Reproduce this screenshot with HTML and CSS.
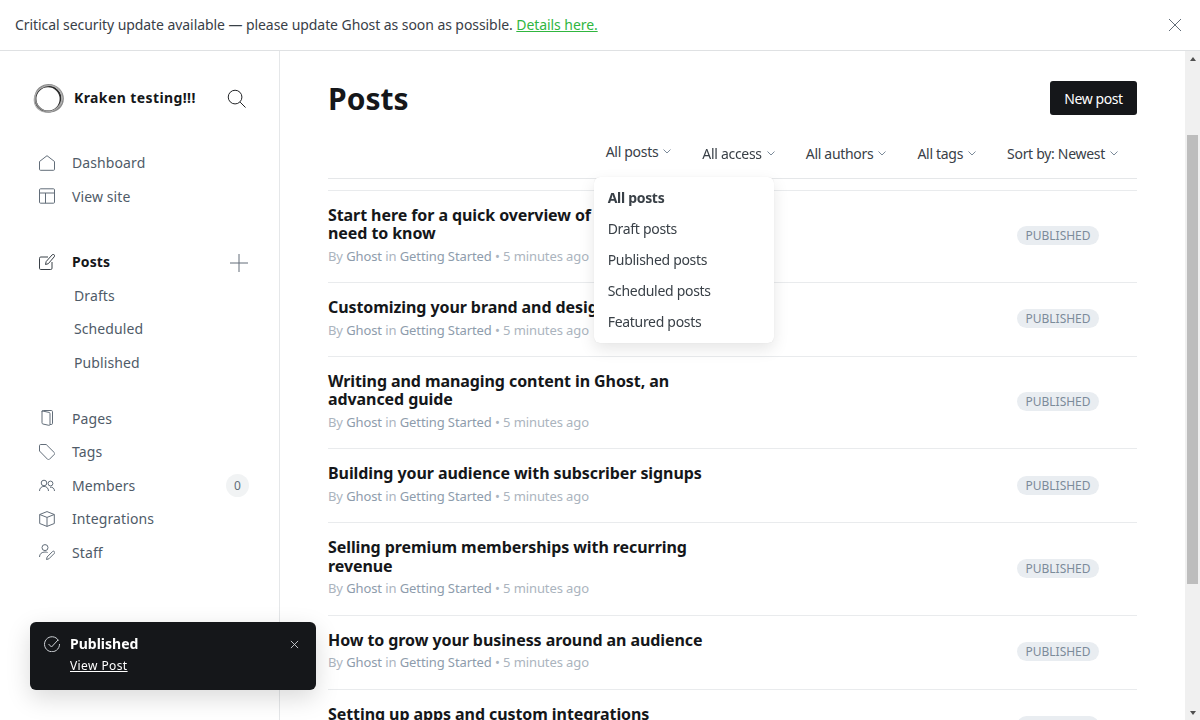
FILE: index.html
```html
<!DOCTYPE html>
<html lang="en">

<head>
    <meta charset="UTF-8">
    <meta name="viewport" content="width=device-width, initial-scale=1.0">
    <title>Posts - Kraken testing!!!</title>
    <link rel="stylesheet" href="styles.css">
</head>

<body>
    <div class="alert">
        <p>Critical security update available — please update Ghost as soon as possible. <a href="#">Details here.</a></p>
        <svg class="alert-close" viewBox="0 0 14 14"><path d="M1 1l12 12M13 1L1 13"/></svg>
    </div>

    <div class="app">
        <aside class="sidebar">
            <div class="brand">
                <svg class="logo" viewBox="0 0 32 32">
                    <ellipse cx="15.500" cy="16.500" rx="13" ry="13" stroke="#2b2b2b" stroke-width="2"/>
                    <ellipse cx="16.500" cy="15.500" rx="14.500" ry="13.800" stroke="#8a8a8a" stroke-width="1.600" transform="rotate(25 16 16)"/>
                    <ellipse cx="15.500" cy="16" rx="14.800" ry="13.200" stroke="#adadad" stroke-width="1.200" transform="rotate(-35 16 16)"/>
                </svg>
                <span class="brand-name">Kraken testing!!!</span>
                <svg class="search" viewBox="0 0 20 20"><circle cx="8.500" cy="8.500" r="7.200"/><path d="M13.800 13.800l5.700 5.700"/></svg>
            </div>

            <ul class="nav">
                <li><svg class="ico" viewBox="0 0 16 16"><path d="M.5 6.500L8 .7l7.500 5.800v7.800a1 1 0 0 1-1 1h-13a1 1 0 0 1-1-1z"/></svg>Dashboard</li>
                <li><svg class="ico" viewBox="0 0 16 16"><rect x=".5" y=".8" width="15" height="14.400" rx="1"/><path d="M.5 5h15M6.500 5v10.200"/></svg>View site</li>
            </ul>

            <ul class="nav">
                <li class="current"><svg class="ico ico-dark" viewBox="0 0 16 16"><path d="M9 3H1.800a1.300 1.300 0 0 0-1.300 1.300v10a1.200 1.200 0 0 0 1.200 1.200h10a1.300 1.300 0 0 0 1.300-1.300V8"/><path d="M6.500 10.500l.7-3L13.200.8a1.300 1.300 0 0 1 2 2L9.300 9.700z"/></svg>Posts<svg class="plus" viewBox="0 0 18 18"><path d="M9 0v18M0 9h18"/></svg></li>
                <li class="sub">Drafts</li>
                <li class="sub">Scheduled</li>
                <li class="sub">Published</li>
            </ul>

            <ul class="nav">
                <li><svg class="ico" viewBox="0 0 16 16"><path d="M3 1.800A1.300 1.300 0 0 1 4.300.5h8A1.200 1.200 0 0 1 13.500 1.700v11.600a1.200 1.200 0 0 1-1.200 1.200H11"/><path d="M3 .9l7 1.500a1.200 1.200 0 0 1 1 1.200v10.700a1 1 0 0 1-1.200 1L3.900 14a1.200 1.200 0 0 1-.9-1.200z"/></svg>Pages</li>
                <li><svg class="ico" viewBox="0 0 16 16"><path d="M.5 1.700A1.200 1.200 0 0 1 1.700.5h5.500l8.300 8.300a1 1 0 0 1 0 1.400l-5.300 5.300a1 1 0 0 1-1.400 0L.5 7z"/></svg>Tags</li>
                <li><svg class="ico" viewBox="0 0 16 16"><circle cx="5" cy="6" r="2.800"/><path d="M.5 14c0-2.800 2-4.600 4.500-4.600S9.500 11.200 9.500 14"/><circle cx="11.500" cy="6.500" r="2.400"/><path d="M11 10.200c2.500-.4 4.500 1.200 4.500 3.800"/></svg>Members<span class="count">0</span></li>
                <li><svg class="ico" viewBox="0 0 16 16"><path d="M8 .6l7.300 2.900v9L8 15.400.7 12.500v-9z"/><path d="M.7 3.500L8 6.400l7.300-2.900M8 6.400v9"/></svg>Integrations</li>
                <li><svg class="ico" viewBox="0 0 16 16"><circle cx="6" cy="3.600" r="3"/><path d="M.5 13c0-3.200 2.300-5 5.500-5 1 0 1.900.2 2.600.5"/><path d="M7.500 15.500l.6-2.500 5.600-5.600a1.300 1.300 0 0 1 1.800 1.800L9.900 14.800z"/></svg>Staff</li>
            </ul>
        </aside>

        <main class="content" id="content">
            <div class="top">
                <div class="title-row">
                    <h1>Posts</h1>
                    <button class="btn-new">New post</button>
                </div>
                <div class="filters">
                    <div class="filter filter-open">All posts<svg viewBox="0 0 8 5"><path d="M.5.5L4 4 7.500.5"/></svg>
                        <ul class="menu">
                            <li class="picked">All posts</li>
                            <li>Draft posts</li>
                            <li>Published posts</li>
                            <li>Scheduled posts</li>
                            <li>Featured posts</li>
                        </ul>
                    </div>
                    <div class="filter">All access<svg viewBox="0 0 8 5"><path d="M.5.5L4 4 7.500.5"/></svg></div>
                    <div class="filter">All authors<svg viewBox="0 0 8 5"><path d="M.5.5L4 4 7.500.5"/></svg></div>
                    <div class="filter">All tags<svg viewBox="0 0 8 5"><path d="M.5.5L4 4 7.500.5"/></svg></div>
                    <div class="filter">Sort by: Newest<svg viewBox="0 0 8 5"><path d="M.5.5L4 4 7.500.5"/></svg></div>
                </div>
            </div>

            <div class="posts" id="posts">
                <div class="post-spacer"></div>
                <div class="post">
                    <div class="post-main">
                        <h3>Start here for a quick overview of everything you need to know</h3>
                        <p class="meta">By <b>Ghost</b> in <b>Getting Started</b> • 5 minutes ago</p>
                    </div>
                    <span class="status">PUBLISHED</span>
                </div>
                <div class="post">
                    <div class="post-main">
                        <h3>Customizing your brand and design settings</h3>
                        <p class="meta">By <b>Ghost</b> in <b>Getting Started</b> • 5 minutes ago</p>
                    </div>
                    <span class="status">PUBLISHED</span>
                </div>
                <div class="post">
                    <div class="post-main">
                        <h3>Writing and managing content in Ghost, an advanced guide</h3>
                        <p class="meta">By <b>Ghost</b> in <b>Getting Started</b> • 5 minutes ago</p>
                    </div>
                    <span class="status">PUBLISHED</span>
                </div>
                <div class="post">
                    <div class="post-main">
                        <h3>Building your audience with subscriber signups</h3>
                        <p class="meta">By <b>Ghost</b> in <b>Getting Started</b> • 5 minutes ago</p>
                    </div>
                    <span class="status">PUBLISHED</span>
                </div>
                <div class="post">
                    <div class="post-main">
                        <h3>Selling premium memberships with recurring revenue</h3>
                        <p class="meta">By <b>Ghost</b> in <b>Getting Started</b> • 5 minutes ago</p>
                    </div>
                    <span class="status">PUBLISHED</span>
                </div>
                <div class="post">
                    <div class="post-main">
                        <h3>How to grow your business around an audience</h3>
                        <p class="meta">By <b>Ghost</b> in <b>Getting Started</b> • 5 minutes ago</p>
                    </div>
                    <span class="status">PUBLISHED</span>
                </div>
                <div class="post">
                    <div class="post-main">
                        <h3>Setting up apps and custom integrations</h3>
                        <p class="meta">By <b>Ghost</b> in <b>Getting Started</b> • 5 minutes ago</p>
                    </div>
                    <span class="status">PUBLISHED</span>
                </div>
                <div class="post">
                    <div class="post-main">
                        <h3>Organizing your content with tags</h3>
                        <p class="meta">By <b>Ghost</b> in <b>Getting Started</b> • 5 minutes ago</p>
                    </div>
                    <span class="status">PUBLISHED</span>
                </div>
            </div>
        </main>

        <div class="scrollbar">
            <div class="scroll-btn"><span class="arrow-up"></span></div>
            <div class="scroll-track"><div class="scroll-thumb"></div></div>
            <div class="scroll-btn"><span class="arrow-down"></span></div>
        </div>
    </div>

    <div class="toast">
        <svg class="toast-check" viewBox="0 0 16 16"><path d="M14.500 4.500A7.500 7.500 0 1 0 15.500 8"/><path d="M4.500 8l3 3 6.500-7"/></svg>
        <div class="toast-text">
            <strong>Published</strong>
            <a href="#">View Post</a>
        </div>
        <svg class="toast-close" viewBox="0 0 10 10"><path d="M1 1l8 8M9 1L1 9"/></svg>
    </div>

    <script>
        // the reference is photographed a little way down the list
        document.querySelector('#content').scrollTop = 103
    </script>
</body>

</html>
```

FILE: styles.css
```css
* {
    box-sizing: border-box;
}

html,
body {
    height: 100%;
}

body {
    margin: 0;
    display: flex;
    flex-direction: column;
    overflow: hidden;
    background-color: white;
    color: #15171a;
    font-family: "Noto Sans", "Open Sans", sans-serif;
    font-size: 14px;
}

ul {
    list-style: none;
    margin: 0;
    padding: 0;
}

svg {
    fill: none;
    flex: none;
}

/* top alert */
.alert {
    flex: none;
    height: 51px;
    display: flex;
    align-items: center;
    justify-content: space-between;
    padding: 0 18px 1px 15px;
    border-bottom: 1px solid #dfe1e3;
    color: #394047;
    letter-spacing: -.07px;
}

.alert p {
    margin: 0;
}

.alert a {
    color: #30b63f;
}

.alert-close {
    width: 14px;
    height: 14px;
    stroke: #626d79;
}

.app {
    flex: 1;
    display: flex;
    min-height: 0;
}

/* sidebar */
.sidebar {
    flex: none;
    width: 280px;
    padding: 31px 30px 0 33px;
    border-right: 1px solid #e5e7e9;
}

.brand {
    display: flex;
    align-items: center;
    height: 32px;
    margin-bottom: 32px;
}

.logo {
    width: 31px;
    height: 31px;
    margin-right: 10px;
}

.brand-name {
    flex: 1;
    padding-bottom: 2px;
    font-weight: 700;
    letter-spacing: .4px;
}

.search {
    width: 19px;
    height: 19px;
    margin: 1px 3px 0 0;
    stroke: #15171a;
}

.nav {
    margin-bottom: 32px;
    color: #4f5b68;
}

.nav + .nav + .nav {
    margin-top: -9.300px;
}

.nav li {
    display: flex;
    align-items: center;
    height: 33.500px;
    letter-spacing: .1px;
}

.ico {
    width: 16px;
    height: 16px;
    margin: 0 17px 0 6px;
    stroke: #626d79;
}

.ico-dark {
    stroke: #394047;
}

.nav .current {
    color: #15171a;
    font-weight: 700;
}

.plus {
    width: 18px;
    height: 18px;
    margin: 2px 1px 0 auto;
    stroke: #626d79;
}

.nav .sub {
    padding-left: 41px;
}

.count {
    width: 23px;
    height: 23px;
    margin-left: auto;
    border-radius: 50%;
    background-color: #f1f3f4;
    color: #626d79;
    font-size: 12px;
    line-height: 23px;
    text-align: center;
    letter-spacing: 0;
}

/* main column */
.content {
    flex: 1;
    overflow-y: scroll;
    scrollbar-width: none;
    padding: 0 48px;
}

/* the browser hides its own scrollbar, so it is drawn here */
.scrollbar {
    flex: none;
    width: 15px;
    display: flex;
    flex-direction: column;
    background-color: #f0f0f0;
}

.scroll-btn {
    flex: none;
    height: 15px;
    display: flex;
    align-items: center;
    justify-content: center;
}

.arrow-up,
.arrow-down {
    width: 0;
    height: 0;
    border-left: 3.500px solid transparent;
    border-right: 3.500px solid transparent;
}

.arrow-up {
    border-bottom: 4px solid #505050;
}

.arrow-down {
    border-top: 4px solid #505050;
}

.scroll-track {
    flex: 1;
    padding: 69px 2px 0;
}

.scroll-thumb {
    height: 449px;
    background-color: #bdbdbd;
}

.top {
    position: sticky;
    top: 0;
    z-index: 2;
    height: 128px;
    background-color: white;
    border-bottom: 1px solid #e5e7e9;
}

.title-row {
    display: flex;
    align-items: center;
    justify-content: space-between;
    height: 64px;
    padding-top: 30px;
    margin-bottom: 29px;
}

h1 {
    margin: 0;
    font-size: 30px;
    font-weight: 700;
}

.btn-new {
    width: 87px;
    height: 34px;
    padding: 0;
    border: none;
    border-radius: 3px;
    background-color: #15171a;
    color: white;
    font-family: inherit;
    font-size: 14px;
    letter-spacing: -.4px;
}

.filters {
    display: flex;
    justify-content: flex-end;
    gap: 31px;
    padding-right: 19px;
    color: #394047;
    letter-spacing: -.3px;
}

.filter {
    position: relative;
    display: flex;
    align-items: center;
}

.filter svg {
    width: 8px;
    height: 5px;
    margin-left: 5px;
    stroke: #7c8b9a;
}

.filter-open {
    top: -2px;
}

.menu {
    position: absolute;
    top: 35px;
    left: -12px;
    width: 180px;
    padding: 5px 0 6px;
    border-radius: 6px;
    background-color: white;
    box-shadow: 0 0 1px rgba(0, 0, 0, .15), 0 6px 16px rgba(0, 0, 0, .1);
}

.menu li {
    height: 31px;
    line-height: 31px;
    padding-left: 14px;
    color: #394047;
}

.menu .picked {
    font-weight: 700;
}

/* posts */
.posts {
    padding-bottom: 40px;
}

.post-spacer {
    height: 113.700px;
}

.post {
    display: flex;
    align-items: center;
    justify-content: space-between;
    padding: 15px 38px 16.400px 0;
    border-top: 1px solid #e9ebed;
}

.post-main {
    width: 400px;
}

h3 {
    margin: 0;
    font-size: 16px;
    font-weight: 700;
    line-height: 18.500px;
    letter-spacing: -.08px;
}

.meta {
    margin: 3px 0 0;
    font-size: 13px;
    line-height: 20px;
    color: #abb4be;
    white-space: nowrap;
    letter-spacing: -.1px;
}

.meta b {
    font-weight: 400;
    color: #8e9cac;
}

.status {
    width: 82px;
    height: 19px;
    border-radius: 10px;
    background-color: #e9edf1;
    color: #7c8b9a;
    font-size: 12px;
    line-height: 19px;
    text-align: center;
}

/* toast */
.toast {
    position: absolute;
    left: 30px;
    top: 622px;
    z-index: 5;
    width: 286px;
    height: 68px;
    display: flex;
    padding: 13px 14px;
    border-radius: 6px;
    background-color: #15171a;
    color: white;
    box-shadow: 0 8px 24px rgba(0, 0, 0, .15);
}

.toast-check {
    width: 16px;
    height: 16px;
    margin-right: 10px;
    stroke: #cfd3d7;
    margin-top: 1px;
}

.toast-text {
    flex: 1;
    display: flex;
    flex-direction: column;
}

.toast-text strong {
    line-height: 18px;
}

.toast-text a {
    margin-top: 4px;
    color: white;
    font-size: 12px;
    letter-spacing: .4px;
}

.toast-close {
    width: 9px;
    height: 9px;
    margin: 5px 3px 0 0;
    stroke: #cfd3d7;
}
```
